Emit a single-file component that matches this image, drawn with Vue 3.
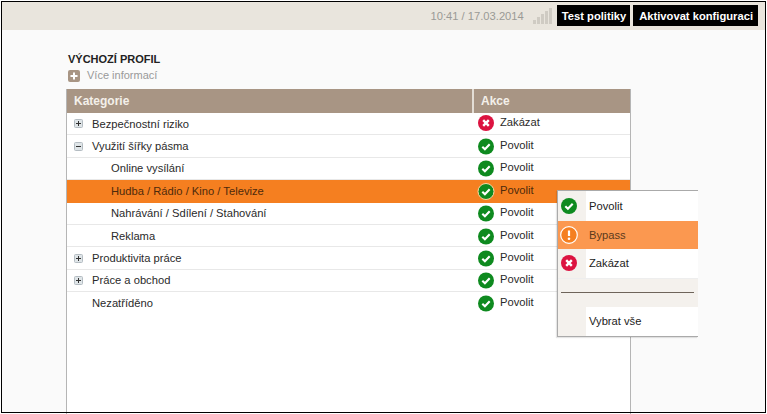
<script setup>
const rows = [
  { name: 'Bezpečnostní riziko', tree: 'plus', action: 'deny', level: 0 },
  { name: 'Využití šířky pásma', tree: 'minus', action: 'allow', level: 0 },
  { name: 'Online vysílání', action: 'allow', level: 1 },
  { name: 'Hudba / Rádio / Kino / Televize', action: 'allow', level: 1, active: true },
  { name: 'Nahrávání / Sdílení / Stahování', action: 'allow', level: 1 },
  { name: 'Reklama', action: 'allow', level: 1 },
  { name: 'Produktivita práce', tree: 'plus', action: 'allow', level: 0 },
  { name: 'Práce a obchod', tree: 'plus', action: 'allow', level: 0 },
  { name: 'Nezatříděno', action: 'allow', level: 0 }
]
const labels = { allow: 'Povolit', deny: 'Zakázat' }
const bars = [4, 7, 10, 13, 16]
</script>

<template>
  <div class="frame">
    <header class="topbar">
      <span class="clock">10:41 / 17.03.2014</span>
      <span class="signal">
        <i v-for="b in bars" :key="b" class="bar" :style="{ height: b + 'px' }"></i>
      </span>
      <button class="black-btn first">Test politiky</button>
      <button class="black-btn second">Aktivovat konfiguraci</button>
    </header>

    <main class="content">
      <h1 class="title">VÝCHOZÍ PROFIL</h1>
      <div class="more">
        <span class="more-icon">
          <svg viewBox="0 0 12 12" width="12" height="12"><path d="M6 2.5v7M2.5 6h7" stroke="#fff" stroke-width="2" fill="none" /></svg>
        </span>
        <span>Více informací</span>
      </div>

      <section class="table">
        <div class="thead">
          <div class="cell-name">Kategorie</div>
          <div class="cell-action">Akce</div>
        </div>
        <div
          v-for="row in rows"
          :key="row.name"
          class="row"
          :class="{ active: row.active }"
        >
          <div class="cell-name" :class="'lvl' + row.level">
            <span v-if="row.tree" class="tree">
              <svg viewBox="0 0 9 9" width="9" height="9">
                <rect x="0.5" y="0.5" width="8" height="8" rx="1" fill="#dfe5e8" stroke="#b4bcc2" />
                <path d="M2 4.5h5" stroke="#333" />
                <path v-if="row.tree === 'plus'" d="M4.5 2v5" stroke="#333" />
              </svg>
            </span>
            <span v-else-if="row.level === 0" class="tree"></span>
            <span>{{ row.name }}</span>
          </div>
          <div class="cell-action">
            <svg class="status" :class="{ ring: row.active, up: row.action === 'deny' }" viewBox="0 0 16 16" width="16" height="16">
              <template v-if="row.action === 'allow'">
                <circle cx="8" cy="8" r="8" fill="#0e8a1f" />
                <path d="M4.3 8.2l2.6 2.5 4.8-5" stroke="#fff" stroke-width="2.1" fill="none" />
              </template>
              <template v-else>
                <circle cx="8" cy="8" r="8" fill="#dc1340" />
                <path d="M5.2 5.2l5.6 5.6M10.8 5.2l-5.6 5.6" stroke="#fff" stroke-width="2.4" fill="none" />
              </template>
            </svg>
            <span class="status-label" :class="{ up: row.action === 'deny' }">{{ labels[row.action] }}</span>
          </div>
        </div>

        <div class="menu">
          <div class="menu-item first-item">
            <span class="menu-gutter">
              <svg viewBox="0 0 16 16" width="16" height="16">
                <circle cx="8" cy="8" r="8" fill="#0e8a1f" />
                <path d="M4.3 8.2l2.6 2.5 4.8-5" stroke="#fff" stroke-width="2.1" fill="none" />
              </svg>
            </span>
            <span class="menu-label">Povolit</span>
          </div>
          <div class="menu-item hot">
            <span class="menu-gutter">
              <svg viewBox="0 0 18 18" width="18" height="18">
                <circle cx="9" cy="9" r="8.3" fill="#f57f20" stroke="#fff" stroke-width="1.2" />
                <path d="M9 4.5v5.5" stroke="#fff" stroke-width="2.2" />
                <circle cx="9" cy="12.8" r="1.3" fill="#fff" />
              </svg>
            </span>
            <span class="menu-label">Bypass</span>
          </div>
          <div class="menu-item">
            <span class="menu-gutter">
              <svg viewBox="0 0 16 16" width="16" height="16">
                <circle cx="8" cy="8" r="8" fill="#dc1340" />
                <path d="M5.2 5.2l5.6 5.6M10.8 5.2l-5.6 5.6" stroke="#fff" stroke-width="2.4" fill="none" />
              </svg>
            </span>
            <span class="menu-label">Zakázat</span>
          </div>
          <div class="menu-sep"><hr class="menu-line" /></div>
          <div class="menu-item">
            <span class="menu-gutter"></span>
            <span class="menu-label">Vybrat vše</span>
          </div>
        </div>
      </section>
    </main>
  </div>
</template>

<style>
html, body { margin: 0; background: #fff; }
</style>

<style scoped>
.frame {
  position: relative;
  box-sizing: border-box;
  width: 767px;
  height: 414px;
  padding: 1px;
  overflow: hidden;
  display: flex;
  flex-direction: column;
  font-family: "Liberation Sans", Arial, sans-serif;
  background: #fff;
}
.frame::before {
  content: "";
  position: absolute;
  left: 1px;
  top: 1px;
  box-sizing: content-box;
  width: 763px;
  height: 410px;
  border: 1px solid #000;
  pointer-events: none;
  z-index: 5;
}
.topbar {
  flex: none;
  height: 29px;
  background: #e9e5dd;
  display: flex;
  align-items: center;
  justify-content: flex-end;
  padding: 0 8px 0 0;
  box-sizing: border-box;
}
.clock {
  font-size: 11.2px;
  color: #9a9a96;
  margin-right: 9px;
}
.signal {
  display: flex;
  align-items: flex-end;
  gap: 1px;
  height: 16px;
  margin-right: 3px;
}
.bar {
  display: block;
  width: 3px;
  background: #cfcbc3;
}
.black-btn {
  border: 0;
  background: #000;
  color: #fff;
  font: bold 11.2px "Liberation Sans", Arial, sans-serif;
  height: 21px;
  margin: 0 0 0 3px;
  white-space: nowrap;
}
.black-btn.first { padding: 0 4px 0 5px; margin-left: 2px; }
.black-btn.second { padding: 0 5px 0 6px; }
.content {
  flex: 1;
  background: #fafafa;
  padding: 0 0 0 65px;
  min-height: 0;
}
.title {
  margin: 22px 0 0 2px;
  font-size: 11px;
  line-height: 14px;
  font-weight: bold;
  color: #222;
}
.more {
  display: flex;
  align-items: center;
  gap: 7px;
  margin: 3px 0 0 2px;
  font-size: 11px;
  line-height: 13px;
  color: #999;
}
.more-icon {
  width: 12px;
  height: 12px;
  border-radius: 2px;
  background: #a89584;
  display: block;
}
.more-icon svg { display: block; }
.table {
  position: relative;
  box-sizing: border-box;
  width: 565px;
  height: 340px;
  margin-top: 7px;
  background: #fff;
  border-left: 1px solid #b5b5b5;
  border-right: 1px solid #b5b5b5;
  font-size: 11.2px;
  color: #2a2a2a;
}
.thead {
  display: flex;
  height: 24px;
  background: #a89584;
  color: #f4f0ea;
  font-weight: bold;
  font-size: 12px;
  align-items: center;
}
.thead .cell-name {
  width: 407px;
  box-sizing: border-box;
  padding-left: 7px;
  height: 100%;
  display: flex;
  align-items: center;
  border-right: 2px solid #e3ddd5;
}
.thead .cell-action { padding-left: 7px; }
.row {
  display: flex;
  align-items: center;
  box-sizing: border-box;
  height: 22.4px;
  border-bottom: 1px solid #e8e8e8;
}
.row:nth-last-of-type(2) { border-bottom: 0; }
.row.active {
  background: #f57f20;
  border-bottom-color: #f57f20;
  color: #4d2a0c;
}
.row .cell-name {
  width: 406px;
  display: flex;
  align-items: center;
  box-sizing: border-box;
}
.lvl0 { padding-left: 7px; }
.lvl1 { padding-left: 44px; }
.tree {
  width: 9px;
  height: 9px;
  margin-right: 9px;
  display: block;
}
.tree svg { display: block; }
.row .cell-action {
  display: flex;
  align-items: center;
  padding-left: 5px;
}
.status { margin-right: 6px; overflow: visible; transform: translateY(0.5px); }
.status.up { transform: translateY(-1px); }
.status-label { transform: translateY(-1px); }
.status-label.up { transform: translateY(-2px); }
.status.ring circle { stroke: #fbd9a8; stroke-width: 1; }
.menu {
  position: absolute;
  left: 490px;
  top: 101px;
  width: 141px;
  background: #fff;
  border-top: 1px solid #aaa;
  border-left: 1px solid #aaa;
  border-bottom: 1px solid #aaa;
  font-size: 11.2px;
  box-sizing: border-box;
  box-shadow: -1px 1px 1px rgba(0, 0, 0, 0.1);
}
.menu-item {
  display: flex;
  align-items: center;
  height: 28.5px;
}
.menu-item.first-item { height: 29.5px; }
.menu-gutter {
  box-sizing: border-box;
  width: 28px;
  height: 100%;
  padding-right: 6px;
  background: #f4f1ed;
  display: flex;
  align-items: center;
  justify-content: center;
  flex: none;
}
.menu-label { margin-left: 3px; color: #222; }
.menu-item.hot { background: #fb9850; }
.menu-item.hot .menu-gutter { background: transparent; }
.menu-item.hot .menu-label { color: #5b3a1c; }
.menu-sep {
  height: 29.5px;
  background: #f4f1ed;
  display: flex;
  align-items: center;
  padding: 0 4px 0 3px;
  border-top: 1px solid #eee;
  box-sizing: border-box;
}
.menu-line {
  width: 100%;
  margin: 0;
  border: 0;
  height: 1px;
  background: #6e645a;
}
</style>
